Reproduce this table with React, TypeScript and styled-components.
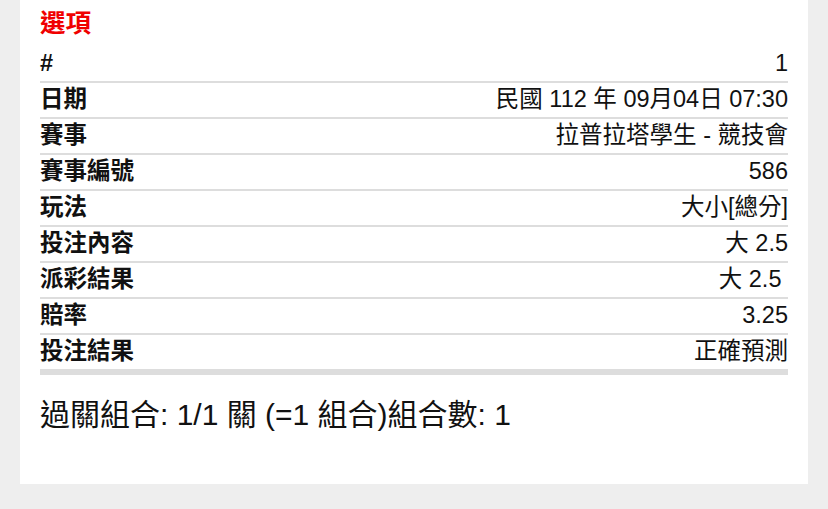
import styled, { createGlobalStyle } from 'styled-components';

const ROWS: [string, string][] = [
  ['#', '1'],
  ['日期', '民國 112 年 09月04日 07:30'],
  ['賽事', '拉普拉塔學生 - 競技會'],
  ['賽事編號', '586'],
  ['玩法', '大小[總分]'],
  ['投注內容', '大 2.5'],
  ['派彩結果', '大 2.5 '],
  ['賠率', '3.25'],
  ['投注結果', '正確預測'],
];

export default function App() {
  return (
    <>
      <GlobalStyle />
      <Page>
        <Panel>
          <Title>選項</Title>
          <Table>
            {ROWS.map(([label, value]) => (
              <Row key={label}>
                <Label>{label}</Label>
                <Value>{value}</Value>
              </Row>
            ))}
          </Table>
          <Summary>過關組合: 1/1 關 (=1 組合)組合數: 1</Summary>
        </Panel>
      </Page>
    </>
  );
}

const GlobalStyle = createGlobalStyle`
  body {
    margin: 0;
    background: #eeeeee;
    font-family: "Liberation Sans", "Noto Sans CJK TC", sans-serif;
    color: #111111;
  }
`;

const Page = styled.div`
  height: 509px;
  padding: 0 20px;
`;

const Panel = styled.div`
  height: 484px;
  padding: 6px 20px 0;
  box-sizing: border-box;

  background: #ffffff;
`;

const Title = styled.h2`
  margin: 0 0 5px;

  color: #f00000;

  font-size: 25.5px;
  font-weight: 700;
  line-height: 34px;
`;

const Table = styled.div`
  display: flex;
  flex-direction: column;
`;

const Row = styled.div`
  display: flex;
  justify-content: space-between;
  align-items: center;

  height: 34px;
  border-bottom: 2px solid #dddddd;

  &:first-child {
    margin-top: 2px;
  }

  &:last-child {
    border-bottom-width: 6px;
  }
`;

const Label = styled.span`
  font-size: 23.5px;
  font-weight: 700;
  line-height: 1;
`;

const Value = styled.span`
  font-size: 23.5px;
  font-weight: 400;
  line-height: 1;
  white-space: pre;
`;

const Summary = styled.p`
  margin: 20px 0 0;

  font-size: 30px;
  font-weight: 400;
  line-height: 40px;
`;
